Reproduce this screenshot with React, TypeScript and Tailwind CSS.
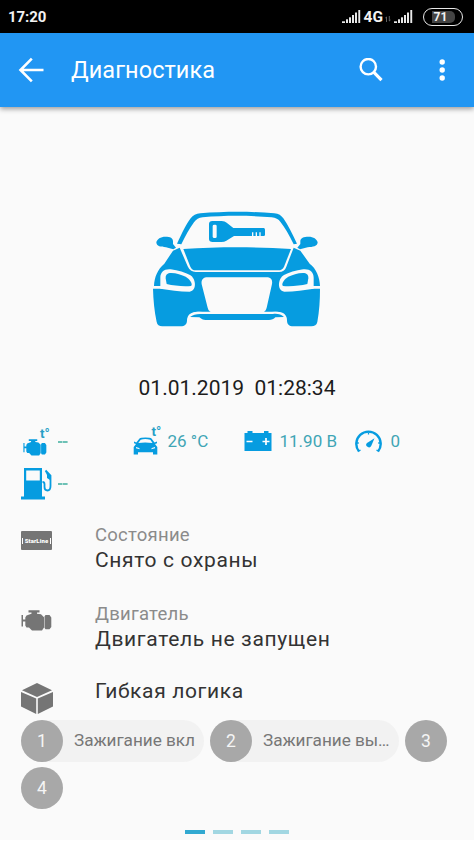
import React from "react";

const BLUE = "#069ce0";

function Signal() {
  return (
    <svg width="19" height="14" viewBox="0 0 19 14" fill="#e8e8e8">
      <rect x="0" y="11.3" width="3" height="1.7" />
      <rect x="4" y="9.3" width="2" height="3.7" />
      <rect x="7" y="7.3" width="2" height="5.7" />
      <rect x="10" y="5" width="2" height="8" />
      <rect x="13" y="2.5" width="2" height="10.5" />
      <rect x="16.3" y="0" width="1.9" height="13" />
    </svg>
  );
}

function StatusBar() {
  return (
    <div className="flex h-[33px] items-center bg-black pl-2 pr-[11px] text-[#f2f2f2]">
      <span className="mt-[2px] text-[15px] font-bold leading-none tracking-[-0.1px]">17:20</span>
      <div className="ml-auto flex items-center">
        <Signal />
        <span className="ml-[3px] mt-[2px] text-[15.5px] font-bold leading-none">4G</span>
        <svg className="ml-[2px] mt-[5px]" width="6" height="6" viewBox="0 0 6 6" stroke="#777" strokeWidth=".8" fill="none">
          <path d="M1.5 6V1L.3 2M4.3 0v5l1.2-1" />
        </svg>
        <span className="ml-[3px]"><Signal /></span>
        <div className="ml-[10px] flex h-[18px] w-[40px] items-center justify-center rounded-full border-[1.5px] border-[#e8e8e8]">
          <div className="flex h-[12px] w-[23px] items-center rounded-r-[5px] bg-[#444] pl-[2px] text-[12px] font-bold leading-none">71</div>
        </div>
      </div>
    </div>
  );
}

function AppBar() {
  return (
    <header className="relative z-10 flex h-[74px] items-center bg-[#2196f3] pl-[18px] pr-[29px] text-white shadow-[0_2px_5px_rgba(0,0,0,0.38)]">
      <svg width="26" height="26" viewBox="0 0 26 26" fill="none" stroke="#fff" strokeWidth="2.6">
        <path d="M25.5 13H3M13.8 1.7L2.5 13l11.3 11.3" />
      </svg>
      <h1 className="ml-[27px] mt-px text-[23.5px] leading-none tracking-[0.05px]">Диагностика</h1>
      <svg className="ml-auto" width="24" height="24" viewBox="0 0 24 24" fill="none" stroke="#fff">
        <circle cx="9.3" cy="8.7" r="7.7" strokeWidth="2.4" />
        <path d="M14.7 14.2l7.8 8" strokeWidth="3.2" />
      </svg>
      <svg className="ml-[56px]" width="6" height="24" viewBox="0 0 6 24" fill="#fff">
        <circle cx="3.2" cy="4" r="2.7" />
        <circle cx="3.2" cy="12" r="2.7" />
        <circle cx="3.2" cy="20" r="2.7" />
      </svg>
    </header>
  );
}

function Car() {
  return (
    <svg className="mx-auto block" width="185" height="135" viewBox="0 0 555 405" fill={BLUE}>
      <path d="M96 131C112 97 124 72 137 55C144 46 153 41 166 40C240 34 318 34 388 40C401 41 409 47 415 55C430 76 441 100 456 131L446 133C432 104 419 82 407 67C400 57 392 53 380 52C310 46 240 46 173 52C161 53 154 58 147 67C133 86 121 108 109 133Z" />
      <path d="M34 127C36 117 47 110 61 110C76 110 84 114 84 124V132L93 143L85 148L63 142C48 141 34 139 34 127Z" />
      <path d="M518 127C516 117 505 110 491 110C476 110 466 114 466 124V132L457 143L465 148L488 142C503 141 518 139 518 127Z" />
      <path d="M115 147C220 140 335 140 438 147L417 200C413 208 408 211 399 211H153C144 211 139 207 136 200Z" />
      <path d="M84 152L104 143L128 199C133 211 141 216 152 216H402C413 216 420 211 424 200L446 143L466 152L494 191C514 206 524 231 525 258H27C28 232 38 207 58 191Z" />
      <path d="M24 266H525C525 300 523 332 517 366C515 375 509 379 499 379H445C432 379 426 373 426 361C425 343 416 336 397 335H157C137 336 127 344 126 361C126 373 119 379 107 379H52C42 379 37 375 35 366C28 332 25 300 24 266Z" />
      <path d="M130 250H420V272H130Z" />
      <path fill="#fafafa" d="M188 232H364C378 232 383 239 381 252L365 323C362 335 355 338 346 338H208C197 338 190 333 188 323L170 253C168 240 174 232 188 232Z" />
      <path fill="#fafafa" d="M46 260V233C46 216 58 206 77 208C100 211 121 218 135 225C153 235 157 271 134 275C103 275 73 269 46 266Z" />
      <path d="M65 252L62 235C61 224 68 219 78 219C94 219 111 225 122 230C133 236 145 252 138 258C112 260 87 257 65 252Z" />
      <path fill="#fafafa" d="M506 260V233C506 216 494 206 475 208C452 211 431 218 417 225C399 235 395 271 418 275C449 275 479 269 506 266Z" />
      <path d="M487 252L490 235C491 224 484 219 474 219C458 219 441 225 430 230C419 236 407 252 414 258C440 260 465 257 487 252Z" />
      <path fill="#fafafa" d="M130 350C143 334 159 333 184 338H370C394 333 411 335 423 350L426 366L420 381H132L126 366Z" />
      <path d="M135 351C144 344 156 341 171 342H384C398 340 408 344 417 351L391 352C386 358 380 360 372 360H182C174 360 169 357 163 352Z" />
      <path fillRule="evenodd" d="M192 72Q192 63 202 63H230Q240 63 245 68L265 84H356Q360 84 360 89V104Q360 108 356 108H347V97H343V108H336V97H332V108H325V97H321V108H267L244 122Q238 126 229 126H203Q192 126 192 117ZM203 78V110Q203 114 208 114H211Q215 114 215 110V78Q215 74 211 74H208Q203 74 203 78Z" />
    </svg>
  );
}

function EngineShape() {
  return (
    <path d="M.5 5H2V9.5H4.3V7.5L5.5 5.5L9 4.3L10.5 3.7V2.6H7.5V.3H18.5V2.6H16V3.7L20 4.3L23 7.2V17.5L21 20.5H11L8 17.5H5.5L4.3 15.5V11.5H2V16.5H.5ZM23.5 6.5L24.5 5H28.5L30.3 7.5V17L28.5 19.3H24.5L23.5 17.8Z" />
  );
}

function EngineTemp() {
  return (
    <svg width="31" height="34" viewBox="0 0 31 34" fill={BLUE}>
      <g transform="translate(2 15) scale(.77 .8)"><EngineShape /></g>
      <text x="19" y="13.5" fontSize="13.5" fontWeight="700" fill="#279fc6" fontFamily="Roboto, sans-serif">t°</text>
    </svg>
  );
}

function CarTemp() {
  return (
    <svg width="31" height="34" viewBox="0 0 31 34" fill={BLUE}>
      <path fillRule="evenodd" d="M4.3 18.5L7.5 14.5Q8.5 13.5 13.5 13.5Q18.5 13.5 19.5 14.5L22.5 18.5L25 17.5V19.3L23 20L25.3 23V30.5H21V28.3H6V30.5H1.7V23L4 20L2 19.3V17.5ZM6.3 19Q13 18 20.5 19L18.3 15.8Q13 14.3 8.7 15.8ZM4 23V24.3L7.8 25.3L7.2 24ZM23 23L19.8 24L19.2 25.3L23 24.3Z" />
      <text x="19.5" y="12" fontSize="13.5" fontWeight="700" fill="#279fc6" fontFamily="Roboto, sans-serif">t°</text>
    </svg>
  );
}

function Battery() {
  return (
    <svg width="29" height="22" viewBox="0 0 29 22" fill={BLUE}>
      <path d="M.5 3H3.5V1H8.5V3H20V1H24.5V3H27.5V21H.5Z" />
      <path d="M2.5 11.5H8.5M18.5 11.5H25.5M22 8V15" stroke="#fff" strokeWidth="1.7" />
    </svg>
  );
}

function Gauge() {
  return (
    <svg width="28" height="24" viewBox="0 0 28 24" fill="none" stroke={BLUE}>
      <path d="M4 22.5A12.2 12.2 0 1 1 23 22.5" strokeWidth="2.4" />
      <path d="M13.5 3.5v2M2 14h1.8M25 14h-1.8M3.5 22.3l2-1.3M23.5 22.3l-2-1.3" strokeWidth="1.3" />
      <path d="M19.5 9.2L16.3 16.7A2.6 2.6 0 1 1 12 13.9Z" fill={BLUE} stroke="none" />
    </svg>
  );
}

function Pump() {
  return (
    <svg width="32" height="33" viewBox="0 0 32 33" fill={BLUE}>
      <path fillRule="evenodd" d="M3 1H21V29.5H24V32.5H0V29.5H3ZM5.2 3.5V13.5H18.8V3.5Z" />
      <path d="M24.5 3.5L29.5 8.5V19Q29.5 23.5 26.5 23.5Q23.5 23.5 23.5 20V17Q23.5 15 21.5 15" fill="none" stroke={BLUE} strokeWidth="1.8" />
      <path d="M24 4L29 8V13L26 11V8Z" />
    </svg>
  );
}

function Stat({ icon, value }: { icon: React.ReactNode; value: string }) {
  return (
    <div className="flex h-[42px] items-center">
      <div className="flex w-[35.5px] shrink-0 items-center">{icon}</div>
      <span className="mt-px text-[17px] leading-none text-[#3fa5b5]">{value}</span>
    </div>
  );
}

function Dashes() {
  return (
    <svg className="mt-px" width="10" height="2" viewBox="0 0 10 2" fill="#3faf9f">
      <path d="M0 .3H4.5V1.7H0ZM5 .3H9.6V1.7H5Z" />
    </svg>
  );
}

function DashStat({ icon }: { icon: React.ReactNode }) {
  return (
    <div className="flex h-[42px] items-center">
      <div className="flex w-[37px] shrink-0 items-center">{icon}</div>
      <Dashes />
    </div>
  );
}

function Entry({ icon, label, value }: { icon: React.ReactNode; label: string; value: string }) {
  return (
    <div className="flex h-[79px] pl-[21px]">
      <div className="w-[74px] shrink-0 pt-[7px]">{icon}</div>
      <div>
        <div className="text-[18.5px] leading-[22px] tracking-[0.25px] text-[#8b8b8b]">{label}</div>
        <div className="mt-px text-[21px] leading-[26px] tracking-[0.65px] text-[#333]">{value}</div>
      </div>
    </div>
  );
}

function Chip({ n, text, wide }: { n: number; text?: string; wide?: boolean }) {
  const size = text ? (wide ? "w-[189px] bg-[#f2f2f2]" : "w-[183px] bg-[#f2f2f2]") : "w-[42px]";
  return (
    <div className={"flex h-[42px] items-center rounded-full " + size}>
      <div className="flex size-[42px] shrink-0 items-center justify-center rounded-full bg-[#a8a8a8] text-[17.5px] text-[#f5f5f5]">{n}</div>
      {text && <span className="ml-[11px] whitespace-nowrap text-[17.2px] leading-none tracking-[-0.05px] text-[#777]">{text}</span>}
    </div>
  );
}

export default function App() {
  return (
    <div className="h-[842px] w-[474px] overflow-hidden bg-white font-['Roboto',sans-serif]">
      <StatusBar />
      <AppBar />
      <main className="flex h-[733px] flex-col bg-[#fafafa]">
        <div className="pt-[93px]"><Car /></div>
        <div className="mt-[41px] whitespace-pre text-center text-[21px] leading-[24px] text-[#1c1c1c]">01.01.2019  01:28:34</div>
        <div className="mt-[20px] grid grid-cols-[111px_112px_111px_1fr] pl-[21px]">
          <DashStat icon={<EngineTemp />} />
          <Stat icon={<CarTemp />} value="26 °C" />
          <Stat icon={<Battery />} value="11.90 В" />
          <Stat icon={<Gauge />} value="0" />
          <DashStat icon={<Pump />} />
        </div>
        <div className="mt-[20px]">
          <Entry
            label="Состояние"
            value="Снято с охраны"
            icon={
              <div className="flex h-[19px] w-[31px] items-center justify-between rounded-[1px] bg-[#757575] px-[1px]">
                <span className="h-[6px] w-px bg-white" />
                <span className="text-[6px] font-black leading-none tracking-[0.1px] text-white">StarLine</span>
                <span className="h-[6px] w-px bg-white" />
              </div>
            }
          />
          <Entry
            label="Двигатель"
            value="Двигатель не запущен"
            icon={<svg width="31" height="21" viewBox="0 0 31 21" fill="#757575"><EngineShape /></svg>}
          />
        </div>
        <div className="flex h-[38px] pl-[21px]">
          <div className="w-[74px] pt-px">
            <svg width="32" height="31" viewBox="0 0 32 31" fill="#757575">
              <path d="M16 0L31 7.3L16 14L1 7.3ZM0 9L15.2 15.5V31L0 23.5ZM32 9L16.8 15.5V31L32 23.5Z" />
            </svg>
          </div>
          <div className="text-[21px] leading-[19px] tracking-[0.65px] text-[#333]">Гибкая логика</div>
        </div>
        <div className="flex flex-wrap gap-x-[6px] gap-y-[5px] pl-[21px]">
          <Chip n={1} text="Зажигание вкл" />
          <Chip n={2} text="Зажигание вы…" wide />
          <Chip n={3} />
          <Chip n={4} />
        </div>
        <div className="mt-[21px] flex justify-center gap-[8px]">
          <div className="h-[4px] w-[20px] bg-[#32a9d1]" />
          <div className="h-[4px] w-[20px] bg-[#a2d7e2]" />
          <div className="h-[4px] w-[20px] bg-[#a2d7e2]" />
          <div className="h-[4px] w-[20px] bg-[#a2d7e2]" />
        </div>
      </main>
    </div>
  );
}
